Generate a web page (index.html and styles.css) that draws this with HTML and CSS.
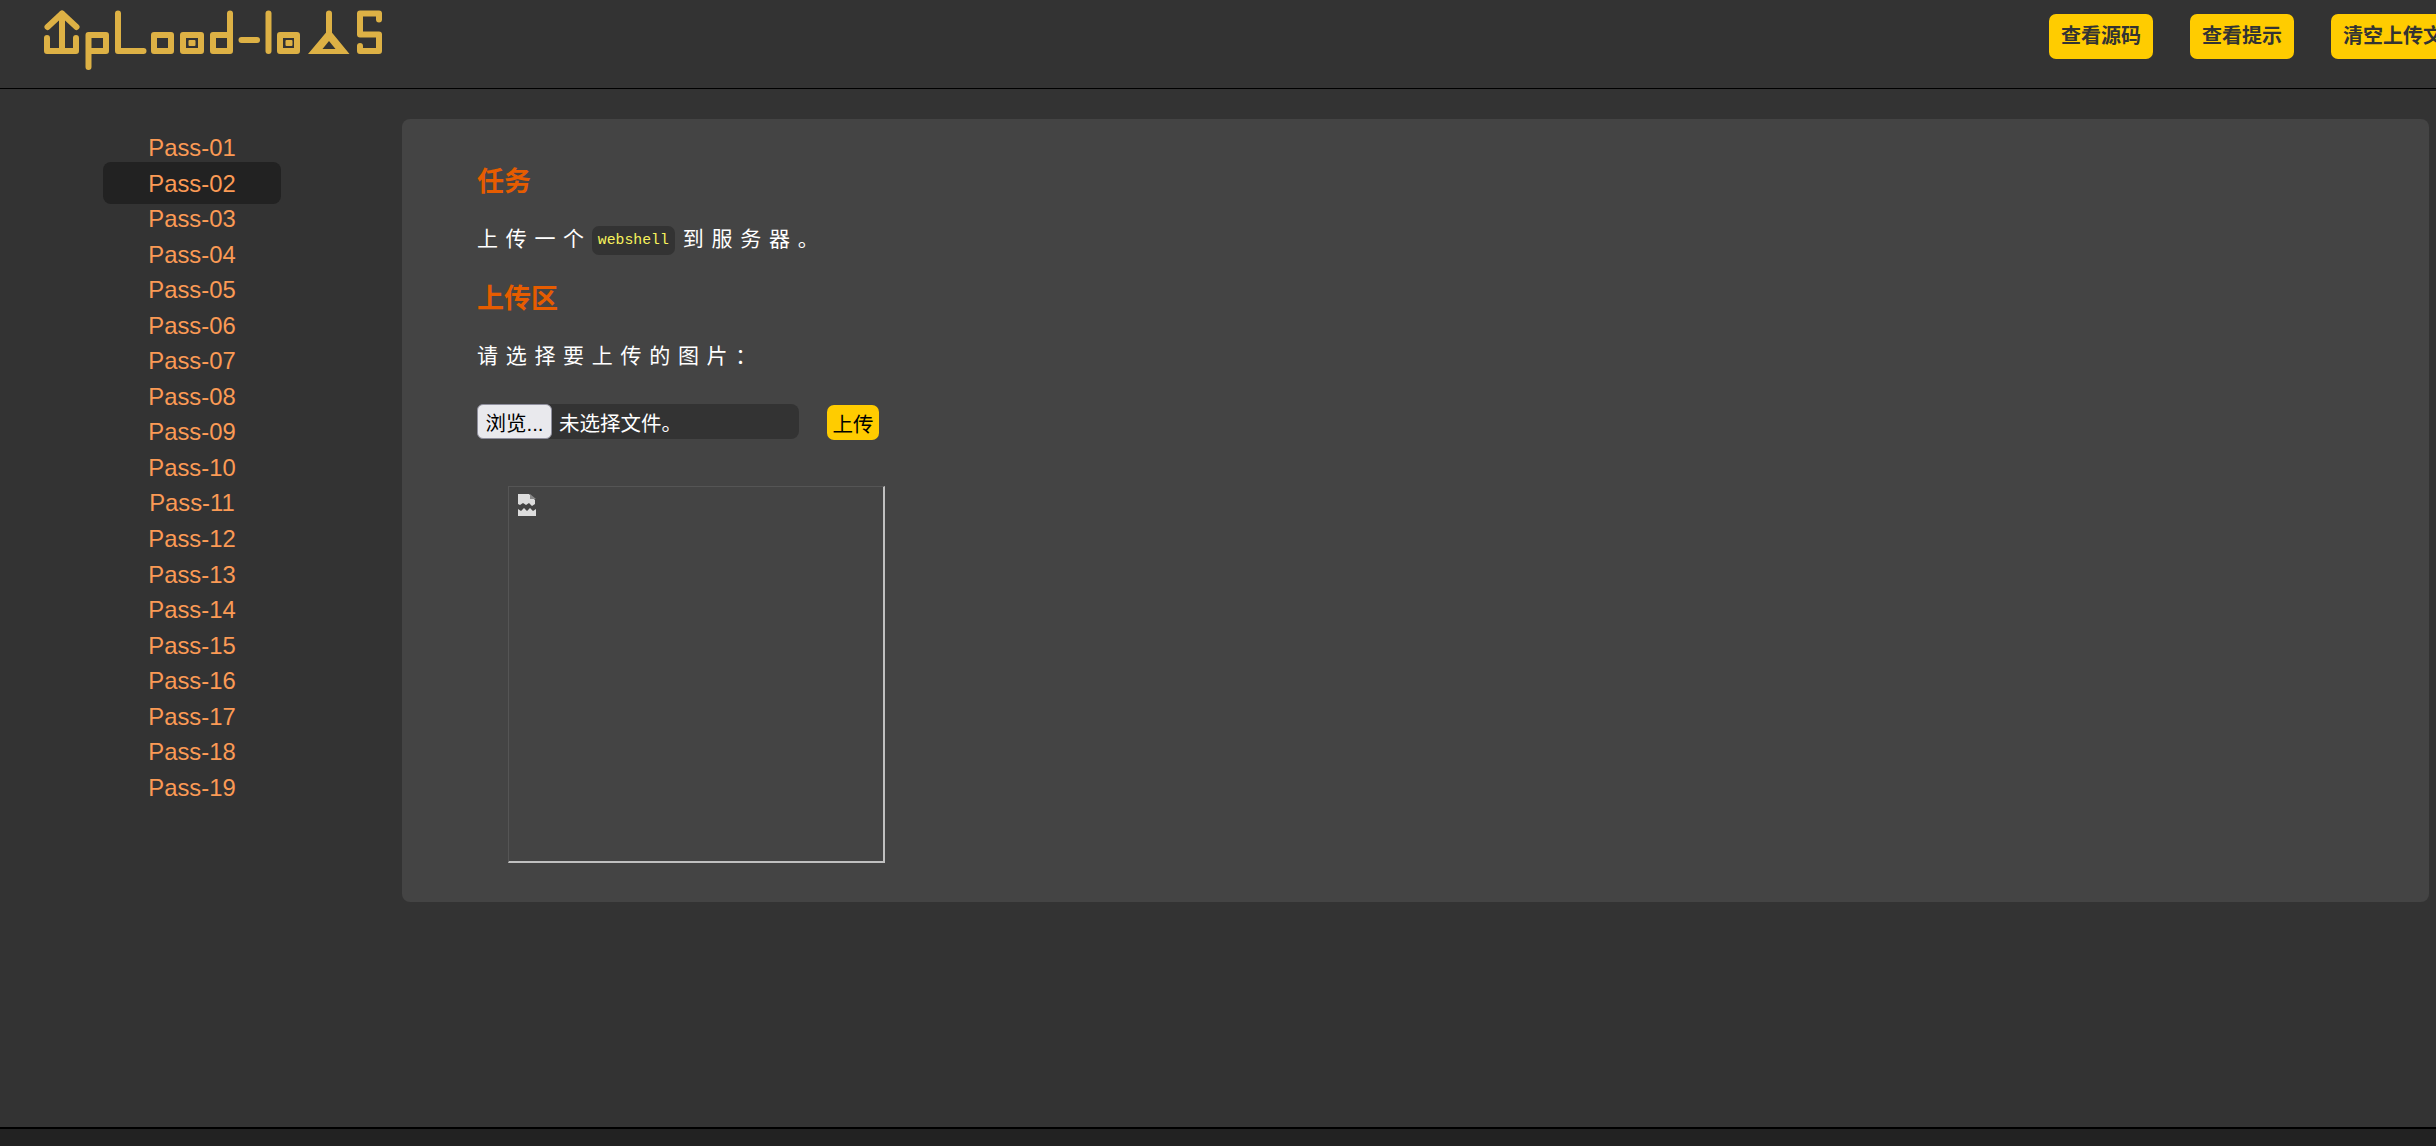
FILE: index.html
```html
<!DOCTYPE html>
<html lang="zh-CN">
<head>
<meta charset="utf-8">
<title>Upload-labs</title>
<link rel="stylesheet" href="styles.css">
</head>
<body>
<div class="app">
  <header class="header">
    <a class="logo" href="#" aria-label="Upload-labs">
      <svg class="logo-svg" width="400" height="72" viewBox="0 0 400 72">
        <g class="logo-lines">
          <path d="M47.5 27 L62 13.5 L76.5 27"/>
          <path d="M62 14 V51"/>
          <path d="M47 38 V51 H76 V38"/>
          <path d="M88.5 67 V35 H106 V51 H88.5"/>
          <path d="M118 13.5 V51 H143.5"/>
          <path d="M154 35 H171 V51 H154 Z"/>
          <path d="M183 35 H201 V51 H183 Z"/>
          <path d="M213 35 H230 M230 51 H213 V35 M230 13.5 V51"/>
          <path d="M241.5 40 H257"/>
          <path d="M268.500 13.500 V51"/>
          <path d="M280 35 H297 V51 H280 Z"/>
          <path d="M329 13.500 V34"/>
          <path d="M379 19.500 V13.500 H360 V34.500 H379 V51 H360 V46"/>
        </g>
        <rect class="logo-fill" x="188.500" y="40" width="7" height="6" rx="1"/>
        <rect class="logo-fill" x="285.500" y="40" width="7" height="6" rx="1"/>
        <path class="logo-fill" fill-rule="evenodd" d="M329 29 L349.500 54 H308 Z M329 41 L322.500 49 H335.500 Z"/>
      </svg>
    </a>
    <nav class="actions">
      <a class="action" href="#">查看源码</a>
      <a class="action" href="#">查看提示</a>
      <a class="action" href="#">清空上传文件</a>
    </nav>
  </header>
  <main class="main">
    <ul class="menu">
      <li class="menu-item"><a href="#">Pass-01</a></li>
      <li class="menu-item active"><a href="#">Pass-02</a></li>
      <li class="menu-item"><a href="#">Pass-03</a></li>
      <li class="menu-item"><a href="#">Pass-04</a></li>
      <li class="menu-item"><a href="#">Pass-05</a></li>
      <li class="menu-item"><a href="#">Pass-06</a></li>
      <li class="menu-item"><a href="#">Pass-07</a></li>
      <li class="menu-item"><a href="#">Pass-08</a></li>
      <li class="menu-item"><a href="#">Pass-09</a></li>
      <li class="menu-item"><a href="#">Pass-10</a></li>
      <li class="menu-item"><a href="#">Pass-11</a></li>
      <li class="menu-item"><a href="#">Pass-12</a></li>
      <li class="menu-item"><a href="#">Pass-13</a></li>
      <li class="menu-item"><a href="#">Pass-14</a></li>
      <li class="menu-item"><a href="#">Pass-15</a></li>
      <li class="menu-item"><a href="#">Pass-16</a></li>
      <li class="menu-item"><a href="#">Pass-17</a></li>
      <li class="menu-item"><a href="#">Pass-18</a></li>
      <li class="menu-item"><a href="#">Pass-19</a></li>
    </ul>
    <section class="panel">
      <h2 class="title">任务</h2>
      <p class="text">上传一个<code class="code">webshell</code>到服务器。</p>
      <h2 class="title title-second">上传区</h2>
      <p class="text text-second">请选择要上传的图片：</p>
      <form class="upload">
        <div class="file">
          <button class="browse" type="button">浏览...</button>
          <span class="file-name">未选择文件。</span>
        </div>
        <button class="submit" type="button">上传</button>
      </form>
      <div class="preview">
        <svg class="broken" width="18" height="22" viewBox="0 0 18 22">
          <path class="broken-page" d="M0 0 H11 L17 6 V10 L14 12 L11 9 L8 11 L5 9 L2 11 L0 10 Z"/>
          <path class="broken-fold" d="M12 0 L18 5 H12 Z"/>
          <path class="broken-page" d="M0 15 L3 17 L6 14 L9 17 L12 14 L15 17 L18 15 V22 H0 Z"/>
        </svg>
      </div>
    </section>
  </main>
  <footer class="footer"></footer>
</div>
</body>
</html>
```
FILE: styles.css
```css
* { box-sizing: border-box; }
html, body { margin: 0; padding: 0; height: 100%; overflow: hidden; }
body {
  background: #333;
  color: #fff;
  font-family: "Liberation Sans", "Noto Sans CJK SC", sans-serif;
}
a { text-decoration: none; }

.app { display: flex; flex-direction: column; height: 1146px; width: 2436px; overflow: hidden; }

.header {
  display: flex;
  justify-content: space-between;
  flex: 0 0 89px;
  border-bottom: 1.5px solid #000;
  background: #333;
}
.logo { display: block; height: 72px; }
.logo-svg { display: block; }
.logo-lines { fill: none; stroke: #ddb145; stroke-width: 6; stroke-linecap: round; stroke-linejoin: round; }
.logo-fill { fill: #ddb145; }

.actions { display: flex; gap: 37px; padding-top: 14px; flex: none; width: 387px; }
.action {
  flex: none;
  height: 45px;
  line-height: 44px;
  padding: 0 12px;
  border-radius: 7px;
  background: #fc0;
  color: #333;
  font-size: 20px;
  font-weight: 700;
  white-space: nowrap;
}

.main { flex: 1; display: flex; align-items: flex-start; min-height: 0; }

.menu {
  flex: 0 0 402px;
  list-style: none;
  margin: 0;
  padding: 41px 121px 0 103px;
}
.menu-item { height: 35.550px; line-height: 36px; text-align: center; font-size: 23.800px; }
.menu-item a { color: #fb9a55; }
.menu-item.active {
  height: 42px;
  line-height: 43px;
  margin: -3.225px 0;
  border-radius: 8px;
  background: #222;
}

.panel {
  flex: 1;
  margin: 30px 7px 0 0;
  padding: 43px 75px 39px;
  background: #444;
  border-radius: 8px;
}
.title {
  margin: 0;
  height: 40px;
  line-height: 40px;
  font-size: 27px;
  font-weight: 700;
  color: #e65c00;
}
.title-second { margin-top: 22px; }
.text {
  margin: 19px 0 0;
  height: 36px;
  line-height: 36px;
  font-size: 21px;
  letter-spacing: 7.700px;
}
.text-second { margin-top: 19px; }
.code {
  display: inline-block;
  height: 29px;
  line-height: 29px;
  margin-right: 8px;
  padding: 0 6px;
  vertical-align: middle;
  border-radius: 7px;
  background: #333;
  color: #f7f25c;
  font-family: "Liberation Mono", monospace;
  font-size: 14.800px;
  letter-spacing: 0;
}

.upload { display: flex; align-items: flex-start; margin-top: 30px; }
.file {
  display: flex;
  align-items: center;
  width: 322px;
  height: 35px;
  background: #333;
  border-radius: 8px;
  font-size: 20.500px;
}
.browse {
  width: 75px;
  height: 35px;
  padding: 0;
  background: #e9e9ed;
  border: 1.500px solid #8f8f9d;
  border-radius: 6px;
  color: #000;
  font: inherit;
}
.file-name { margin-left: 7px; color: #fff; white-space: nowrap; }
.submit {
  width: 52px;
  height: 35px;
  margin: 1px 0 0 28px;
  padding: 0;
  border: 0;
  border-radius: 7px;
  background: #fc0;
  color: #000;
  font: inherit;
  font-size: 20.500px;
}

.preview {
  width: 377px;
  height: 377px;
  margin: 46px 0 0 30.500px;
  padding: 7px 0 0 9px;
  border-style: solid;
  border-width: 1px 2.500px 2.500px 1px;
  border-color: #555 #c0c0c0 #c0c0c0 #555;
}
.broken { display: block; }
.broken-page { fill: #ddd; }
.broken-fold { fill: #888; }

.footer { flex: 0 0 19px; border-top: 2px solid #000; background: #222; }
```
